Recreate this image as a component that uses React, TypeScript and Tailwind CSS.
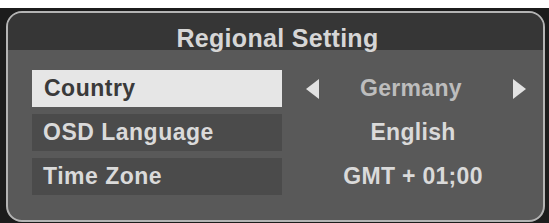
import React from "react";

function Arrow({ dir }: { dir: "left" | "right" }) {
  return (
    <svg width="14" height="22" viewBox="0 0 14 22" aria-hidden className="shrink-0">
      {dir === "left" ? (
        <polygon points="13,1 13,21 0,11" fill="#e2e2e2" />
      ) : (
        <polygon points="1,1 1,21 14,11" fill="#e2e2e2" />
      )}
    </svg>
  );
}

const rows = [
  { label: "Country", value: "Germany", active: true },
  { label: "OSD Language", value: "English", active: false },
  { label: "Time Zone", value: "GMT + 01;00", active: false },
];

export default function App() {
  return (
    <div
      className="flex h-[223px] w-[549px] flex-col bg-white"
      style={{ fontFamily: '"Liberation Sans", Arial, sans-serif' }}
    >
      <div className="h-[8px] shrink-0" />
      <div className="flex flex-1 bg-[#1c1c1c] pb-[1px] pl-[6px] pr-[4px] pt-[3px]">
        <div className="flex flex-1 flex-col overflow-hidden rounded-[16px] border-2 border-[#b4b4b4] bg-[#595959]">
          <div className="flex h-[37px] shrink-0 items-end justify-center bg-[#363636] pl-[4px]">
            <span className="translate-y-[1px] text-[25px] font-bold leading-none tracking-[0.3px] text-[#d6d6d6]">
              Regional Setting
            </span>
          </div>
          <div className="flex flex-col gap-[7px] pl-[24px] pt-[20px]">
            {rows.map((r) => (
              <div key={r.label} className="flex h-[37px] items-center">
                <div
                  className={
                    r.active
                      ? "flex h-full w-[250px] items-center bg-[#e6e6e6] pl-[12px] text-[23px] font-bold tracking-[0.5px] text-[#3a3a3a]"
                      : "flex h-full w-[250px] items-center bg-[#4b4b4b] pl-[11px] text-[23px] font-bold tracking-[0.5px] text-[#dadada]"
                  }
                >
                  {r.label}
                </div>
                {r.active ? (
                  <div className="flex w-[244px] items-center pl-[24px]">
                    <Arrow dir="left" />
                    <span className="flex-1 pr-[10px] text-center text-[23px] font-bold tracking-[0.3px] text-[#bdbdbd]">
                      {r.value}
                    </span>
                    <Arrow dir="right" />
                  </div>
                ) : (
                  <div className="w-[240px] pl-[22px] text-center text-[23px] font-bold tracking-[0.3px] text-[#dadada]">
                    {r.value}
                  </div>
                )}
              </div>
            ))}
          </div>
        </div>
      </div>
    </div>
  );
}
